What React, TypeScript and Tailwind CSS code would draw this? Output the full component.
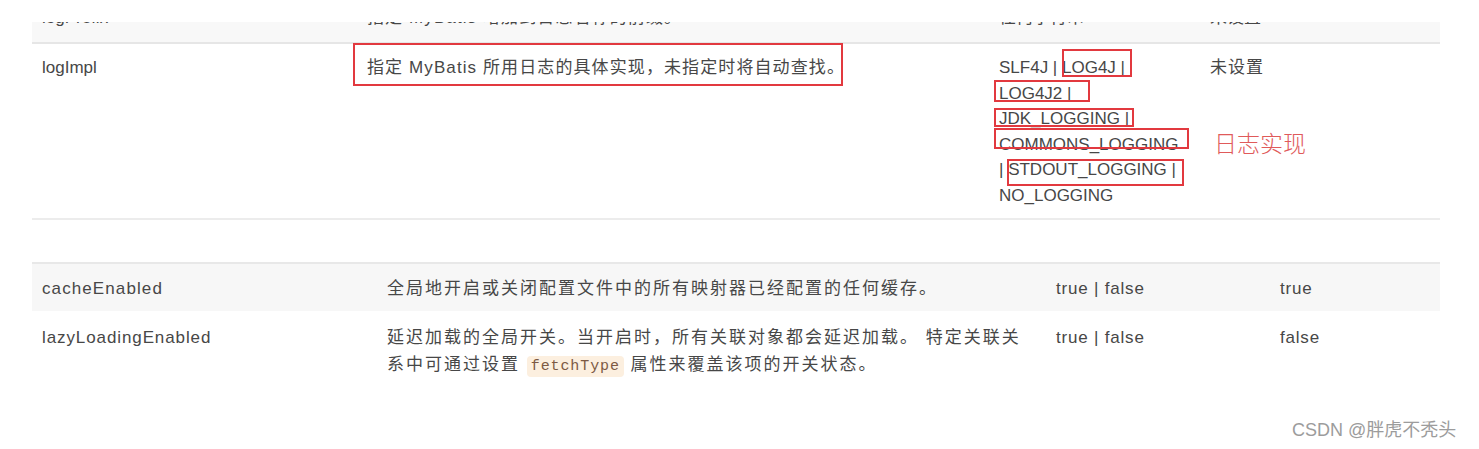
const font = { fontFamily: '"Liberation Sans", "Noto Sans CJK SC", sans-serif' };

function RedBox({ className }: { className: string }) {
  return <div className={`absolute border-2 border-[#e2393f] ${className}`} />;
}

export default function App() {
  return (
    <div className="relative w-[1479px] h-[449px] bg-white text-[#474747] overflow-hidden" style={font}>
      <div className="pt-[22px] pl-[32px]">
        {/* first table: cut-off previous row + logImpl */}
        <div className="w-[1408px]">
          <div className="h-[22px] overflow-hidden bg-[#f8f8f8] border-b-2 border-[#e6e6e6] pl-[10px] grid grid-cols-[325px_632px_211px_1fr] text-[17px] leading-[20px]">
            <div className="-mt-[14px]">logPrefix</div>
            <div className="-mt-[14px] tracking-[1.1px]">指定 MyBatis 增加到日志名称的前缀。</div>
            <div className="-mt-[14px]">任何字符串</div>
            <div className="-mt-[14px]">未设置</div>
          </div>
          <div className="pl-[10px] pt-[11px] pb-[9px] grid grid-cols-[325px_632px_211px_1fr] text-[17px] leading-[25.6px] border-b-2 border-[#ececec]">
            <div>logImpl</div>
            <div className="tracking-[1.1px]">指定 MyBatis 所用日志的具体实现，未指定时将自动查找。</div>
            <div className="flex flex-col">
              <span>SLF4J | LOG4J |</span>
              <span>LOG4J2 |</span>
              <span>JDK_LOGGING |</span>
              <span>COMMONS_LOGGING</span>
              <span>| STDOUT_LOGGING |</span>
              <span>NO_LOGGING</span>
            </div>
            <div className="tracking-[1px]">未设置</div>
          </div>
        </div>

        {/* second table */}
        <div className="w-[1408px] mt-[42px] border-t-2 border-[#e8e8e8] text-[17px] leading-[27px]">
          <div className="bg-[#f7f7f7] pl-[10px] pt-[11px] pb-[9px] grid grid-cols-[345px_669px_224px_1fr]">
            <div className="tracking-[1.1px]">cacheEnabled</div>
            <div className="tracking-[2px]">全局地开启或关闭配置文件中的所有映射器已经配置的任何缓存。</div>
            <div className="tracking-[0.8px]">true | false</div>
            <div className="tracking-[0.8px]">true</div>
          </div>
          <div className="pl-[10px] pt-[13px] pb-[11px] grid grid-cols-[345px_669px_224px_1fr]">
            <div className="tracking-[0.9px]">lazyLoadingEnabled</div>
            <div className="tracking-[2px]">
              延迟加载的全局开关。当开启时，所有关联对象都会延迟加载。 特定关联关
              <br />
              系中可通过设置{' '}
              <code
                className="bg-[#fcefdf] text-[#7d5a44] rounded-[4px] px-[4px] py-[2px] text-[15px] tracking-[0.9px]"
                style={{ fontFamily: '"Liberation Mono", monospace' }}
              >
                fetchType
              </code>{' '}
              属性来覆盖该项的开关状态。
            </div>
            <div className="tracking-[0.8px]">true | false</div>
            <div className="tracking-[0.8px]">false</div>
          </div>
        </div>
      </div>

      {/* annotations */}
      <RedBox className="left-[353px] top-[43px] w-[490px] h-[43px]" />
      <RedBox className="left-[1062px] top-[49px] w-[70px] h-[28px]" />
      <RedBox className="left-[994px] top-[80px] w-[96px] h-[22px]" />
      <RedBox className="left-[994px] top-[108px] w-[140px] h-[19px]" />
      <RedBox className="left-[994px] top-[128px] w-[195px] h-[21px]" />
      <RedBox className="left-[1007px] top-[159px] w-[177px] h-[27px]" />
      <div
        className="absolute left-[1214px] top-[129px] text-[23px] leading-[26px] text-[#e05a5a] font-light"
        style={{ fontFamily: '"Noto Sans CJK SC", sans-serif' }}
      >
        日志实现
      </div>

      {/* watermark */}
      <div className="absolute left-[1292px] top-[419px] text-[18px] leading-[22px] text-[#9c9c9c] [text-shadow:0_0_2px_#fff]">
        CSDN @胖虎不秃头
      </div>
    </div>
  );
}
